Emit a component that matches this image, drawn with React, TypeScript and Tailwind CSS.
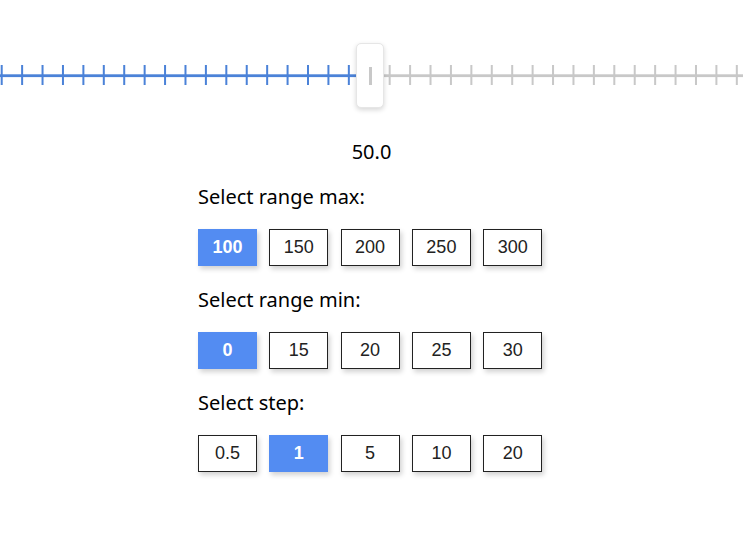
import { useState } from "react";

const maxOptions = [100, 150, 200, 250, 300];
const minOptions = [0, 15, 20, 25, 30];
const stepOptions = [0.5, 1, 5, 10, 20];

const TICK_COUNT = 37;
const TICK_START = 1.7;
const TICK_GAP = 20.42;
const THUMB_X = 370;

function SliderTrack() {
  const ticks = Array.from({ length: TICK_COUNT }, (_, i) => TICK_START + i * TICK_GAP);
  return (
    <svg width="743" height="40" viewBox="0 0 743 40" className="block">
      <rect x="0" y="19.3" width={THUMB_X} height="2.8" fill="#4b82d8" />
      <rect x={THUMB_X} y="19.3" width={743 - THUMB_X} height="2.8" fill="#c8c8c8" />
      {ticks.map((x) => (
        <rect
          key={x}
          x={x - 1}
          y="10"
          width="2"
          height="20"
          fill={x < THUMB_X ? "#4b82d8" : "#c8c8c8"}
        />
      ))}
    </svg>
  );
}

function OptionRow({
  label,
  options,
  value,
  onChange,
}: {
  label: string;
  options: number[];
  value: number;
  onChange: (v: number) => void;
}) {
  return (
    <div className="flex flex-col">
      <div className="font-['Noto_Sans',sans-serif] text-[20px] leading-[28px] text-black">{label}</div>
      <div className="mt-[18px] flex gap-[12.3px]">
        {options.map((opt) => {
          const active = opt === value;
          return (
            <button
              key={opt}
              onClick={() => onChange(opt)}
              className={
                active
                  ? "flex h-[37px] w-[59px] items-center justify-center bg-[#538cf2] font-['Liberation_Sans',Arial,sans-serif] text-[18px] font-bold text-white shadow-[2px_3px_5px_rgba(0,0,0,0.18)]"
                  : "flex h-[37px] w-[59px] items-center justify-center border border-[#222] bg-white font-['Liberation_Sans',Arial,sans-serif] text-[18px] text-[#222] shadow-[2px_3px_5px_rgba(0,0,0,0.18)]"
              }
            >
              {opt}
            </button>
          );
        })}
      </div>
    </div>
  );
}

export default function App() {
  const [max, setMax] = useState(100);
  const [min, setMin] = useState(0);
  const [step, setStep] = useState(1);

  return (
    <div className="h-[546px] w-[743px] overflow-hidden bg-white">
      <div className="relative h-[135px]">
        <div className="pt-[55px]">
          <SliderTrack />
        </div>
        <div className="absolute left-[356px] top-[43px] flex h-[65px] w-[28px] justify-center rounded-[5px] border border-[#e6e6e6] bg-white shadow-[0_2px_5px_rgba(0,0,0,0.16)]">
          <div className="mt-[23px] h-[18px] w-[3px] bg-[#c8c8c8]" />
        </div>
      </div>

      <div className="text-center font-['Noto_Sans',sans-serif] text-[20px] leading-[34px] text-black">
        50.0
      </div>

      <div className="mt-[14px] flex flex-col gap-[20px] pl-[198px]">
        <OptionRow label="Select range max:" options={maxOptions} value={max} onChange={setMax} />
        <OptionRow label="Select range min:" options={minOptions} value={min} onChange={setMin} />
        <OptionRow label="Select step:" options={stepOptions} value={step} onChange={setStep} />
      </div>
    </div>
  );
}
